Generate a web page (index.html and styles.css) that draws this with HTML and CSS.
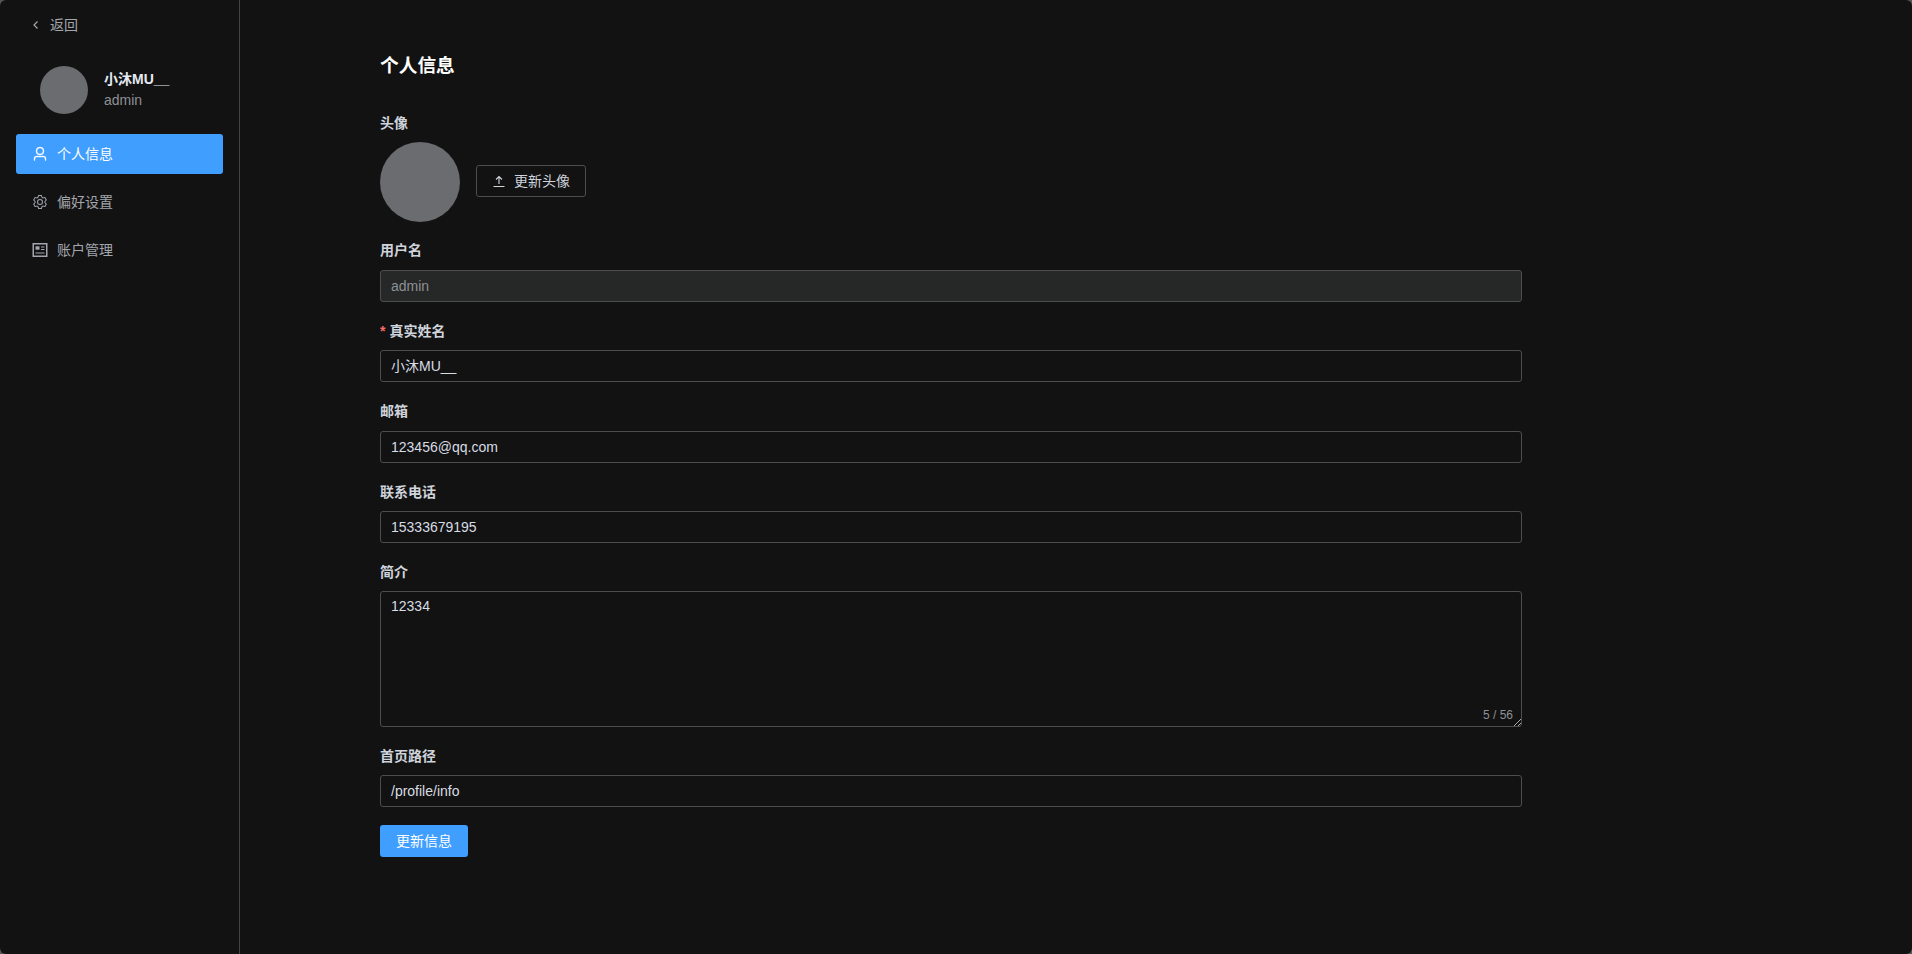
FILE: index.html
```html
<!DOCTYPE html>
<html lang="zh-CN">
<head>
<meta charset="utf-8">
<title>个人信息</title>
<link rel="stylesheet" href="styles.css">
</head>
<body>
<div class="app">
  <aside class="sidebar">
    <div class="back">
      <svg class="back-icon" viewBox="0 0 12 12" fill="none" stroke="currentColor" stroke-width="1.200"><path d="M7.500 2.500L4 6l3.500 3.500"/></svg>
      <span class="lift">返回</span>
    </div>
    <div class="user">
      <div class="user-avatar"></div>
      <div class="user-text">
        <div class="user-name">小沐MU__</div>
        <div class="user-role">admin</div>
      </div>
    </div>
    <nav class="menu">
      <div class="menu-item active">
        <svg class="menu-icon" viewBox="0 0 1024 1024"><path fill="currentColor" stroke="currentColor" stroke-width="24" d="M512 512a192 192 0 1 0 0-384 192 192 0 0 0 0 384zm0 64a256 256 0 1 1 0-512 256 256 0 0 1 0 512zm320 320v-96a96 96 0 0 0-96-96H288a96 96 0 0 0-96 96v96a32 32 0 1 1-64 0v-96a160 160 0 0 1 160-160h448a160 160 0 0 1 160 160v96a32 32 0 1 1-64 0z"/></svg>
        <span class="lift">个人信息</span>
      </div>
      <div class="menu-item">
        <svg class="menu-icon" viewBox="0 0 1024 1024"><path fill="currentColor" d="M600.704 64a32 32 0 0 1 30.464 22.208l35.2 109.376c14.784 7.232 28.928 15.36 42.432 24.512l112.384-24.192a32 32 0 0 1 34.432 15.36L944.32 364.8a32 32 0 0 1-4.032 37.504l-77.12 85.12a357.12 357.12 0 0 1 0 49.024l77.12 85.248a32 32 0 0 1 4.032 37.504l-88.704 153.6a32 32 0 0 1-34.432 15.296L708.8 803.904c-13.44 9.088-27.648 17.28-42.368 24.512l-35.264 109.376A32 32 0 0 1 600.704 960H423.296a32 32 0 0 1-30.464-22.208L357.696 828.48a351.616 351.616 0 0 1-42.56-24.64l-112.32 24.256a32 32 0 0 1-34.432-15.36L79.68 659.2a32 32 0 0 1 4.032-37.504l77.12-85.248a357.12 357.12 0 0 1 0-48.896l-77.12-85.248A32 32 0 0 1 79.68 364.8l88.704-153.6a32 32 0 0 1 34.432-15.296l112.32 24.256c13.568-9.152 27.776-17.408 42.56-24.64l35.2-109.312A32 32 0 0 1 423.232 64H600.64zm-23.424 64H446.72l-36.352 113.088-24.512 11.968a294.113 294.113 0 0 0-34.816 20.096l-22.656 15.36-116.224-25.088-65.28 113.152 79.68 88.192-1.92 27.136a293.12 293.12 0 0 0 0 40.192l1.92 27.136-79.808 88.192 65.344 113.152 116.224-25.024 22.656 15.296a294.113 294.113 0 0 0 34.816 20.096l24.512 11.968L446.72 896h130.688l36.48-113.152 24.448-11.904a288.282 288.282 0 0 0 34.752-20.096l22.592-15.296 116.288 25.024 65.28-113.152-79.744-88.192 1.92-27.136a293.12 293.12 0 0 0 0-40.256l-1.92-27.136 79.808-88.128-65.344-113.152-116.288 24.96-22.592-15.232a287.616 287.616 0 0 0-34.752-20.096l-24.448-11.904L577.344 128zM512 320a192 192 0 1 1 0 384 192 192 0 0 1 0-384zm0 64a128 128 0 1 0 0 256 128 128 0 0 0 0-256z"/></svg>
        <span class="lift">偏好设置</span>
      </div>
      <div class="menu-item">
        <svg class="menu-icon" viewBox="0 0 16 16" fill="none" stroke="currentColor" stroke-width="1.500"><rect x="1.250" y="1.750" width="13.500" height="12.500"/><rect x="3.500" y="4.300" width="4" height="3.400" fill="currentColor" stroke="none"/><path d="M9 5h3.500M9 7.500h3.500M3.500 11h9" stroke-width="1.200"/></svg>
        <span class="lift">账户管理</span>
      </div>
    </nav>
  </aside>
  <main class="main">
    <h1 class="title">个人信息</h1>
    <form class="form">
      <div class="field avatar-field">
        <label class="label">头像</label>
        <div class="avatar-row">
          <div class="big-avatar"></div>
          <button type="button" class="btn-outline">
            <svg class="upload-icon" viewBox="0 0 14 14" fill="none" stroke="currentColor" stroke-width="1.100"><path d="M1.500 12.500h11M7 10V2.500M4 5.500l3-3 3 3"/></svg>
            <span class="lift">更新头像</span>
          </button>
        </div>
      </div>
      <div class="field">
        <label class="label">用户名</label>
        <div class="input disabled">admin</div>
      </div>
      <div class="field">
        <label class="label"><span class="req">*</span>真实姓名</label>
        <div class="input">小沐MU__</div>
      </div>
      <div class="field">
        <label class="label">邮箱</label>
        <div class="input">123456@qq.com</div>
      </div>
      <div class="field">
        <label class="label">联系电话</label>
        <div class="input">15333679195</div>
      </div>
      <div class="field">
        <label class="label">简介</label>
        <div class="textarea">
          12334
          <span class="count">5 / 56</span>
          <svg class="resize" viewBox="0 0 8 8" stroke="#aaa" stroke-width="1"><path d="M1 8L8 1M5 8l3-3"/></svg>
        </div>
      </div>
      <div class="field">
        <label class="label">首页路径</label>
        <div class="input">/profile/info</div>
      </div>
      <button type="button" class="btn-primary"><span class="lift">更新信息</span></button>
    </form>
  </main>
</div>
</body>
</html>
```

FILE: styles.css
```css
* { box-sizing: border-box; }
html, body { height: 100%; }
body {
  margin: 0;
  background: #555;
  font-family: "Liberation Sans", "Noto Sans CJK SC", sans-serif;
  font-size: 14px;
  color: #cfd3dc;
}
.app {
  height: 954px;
  display: flex;
  background: #121212;
  border-radius: 6px;
  overflow: hidden;
}
.lift { display: block; padding-bottom: 2px; }
.sidebar {
  width: 240px;
  flex: none;
  border-right: 1px solid #414243;
  padding: 0 16px;
}
.back {
  height: 50px;
  display: flex;
  align-items: center;
  gap: 8px;
  padding-left: 14px;
  color: #a3a6ad;
}
.back-icon { width: 12px; height: 12px; }
.user {
  height: 80px;
  margin-bottom: 4px;
  display: flex;
  align-items: center;
  gap: 16px;
  padding-left: 24px;
}
.user-avatar { width: 48px; height: 48px; border-radius: 50%; background: #6b6c70; }
.user-text { line-height: 21px; }
.user-name { font-weight: 700; color: #e5eaf3; }
.user-role { color: #8d9095; }
.menu { display: flex; flex-direction: column; gap: 8px; }
.menu-item {
  height: 40px;
  display: flex;
  align-items: center;
  gap: 8px;
  padding-left: 16px;
  border-radius: 3px;
  color: #a3a6ad;
}
.menu-item span { margin-left: 1px; }
.menu-item.active { background: #409eff; color: #fff; }
.menu-icon { width: 16px; height: 16px; }
.main { flex: 1; padding: 0 0 0 140px; }
.title {
  margin: 0;
  padding-top: 52px;
  height: 112px;
  font-size: 18.72px;
  line-height: 28px;
  font-weight: 700;
  color: #fff;
}
.form { width: 1142px; }
.field { margin-bottom: 18px; }
.avatar-field { margin-bottom: 17px; }
.label {
  display: block;
  height: 30.4px;
  padding-bottom: 8px;
  line-height: 22px;
  font-weight: 700;
  color: #cfd3dc;
}
.req { color: #f56c6c; margin-right: 4px; }
.avatar-row { display: flex; align-items: center; gap: 16px; height: 80px; }
.big-avatar { width: 80px; height: 80px; border-radius: 50%; background: #6b6c70; }
.btn-outline {
  width: 110px;
  height: 32px;
  margin-bottom: 2px;
  display: flex;
  align-items: center;
  justify-content: center;
  gap: 8px;
  background: transparent;
  border: 1px solid #4c4d4f;
  border-radius: 3px;
  color: #cfd3dc;
  font: inherit;
  padding: 0;
}
.upload-icon { width: 14px; height: 14px; }
.input {
  height: 32px;
  line-height: 30px;
  padding: 0 10px;
  border: 1px solid #4c4d4f;
  border-radius: 3px;
  color: #d8dce4;
}
.input.disabled { background: #262727; color: #8d9095; }
.textarea {
  position: relative;
  height: 135.400px;
  padding: 3px 10px;
  line-height: 22px;
  border: 1px solid #4c4d4f;
  border-radius: 3px;
  color: #d8dce4;
}
.count {
  position: absolute;
  right: 8px;
  bottom: 4px;
  font-size: 12px;
  line-height: 14px;
  color: #8d9095;
}
.resize { position: absolute; right: 0; bottom: 0; width: 8px; height: 8px; }
.btn-primary {
  display: block;
  width: 88px;
  height: 32px;
  background: #409eff;
  border: none;
  border-radius: 3px;
  color: #fff;
  font: inherit;
  padding: 0;
}
```
